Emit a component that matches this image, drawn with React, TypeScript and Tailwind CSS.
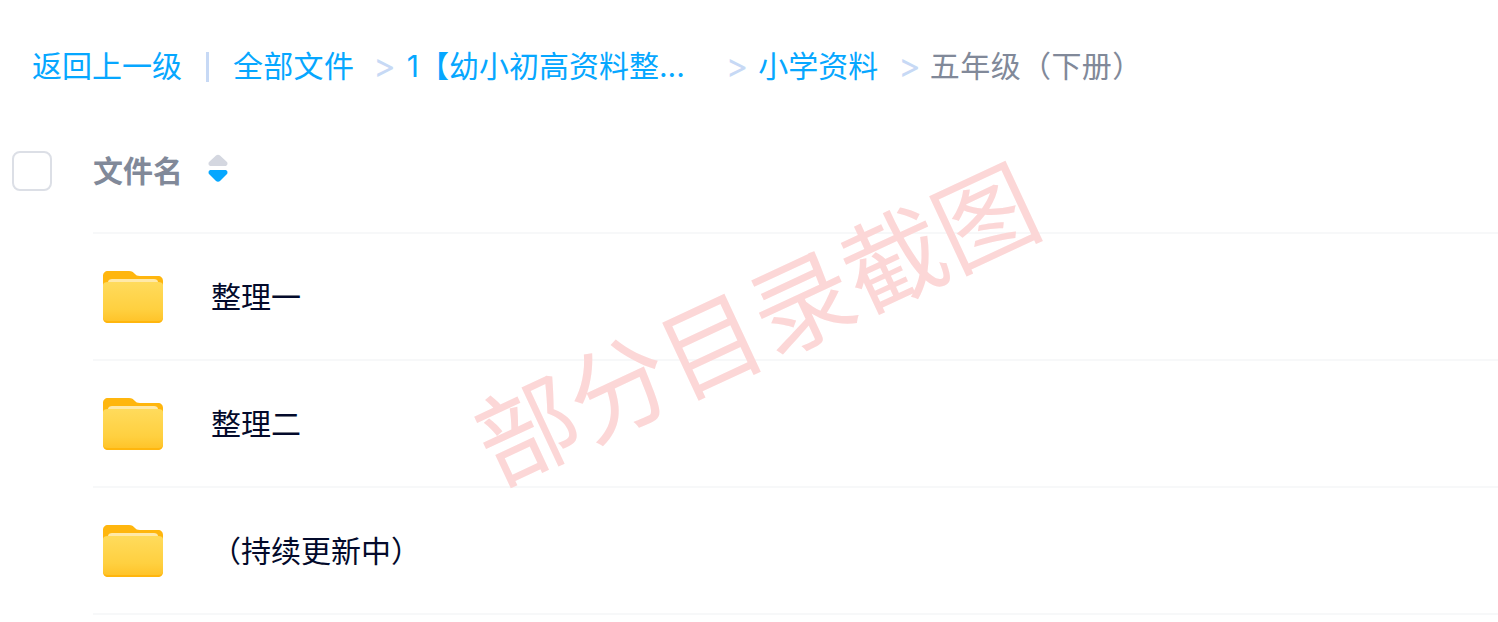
const FONT = "font-['Inter','Noto_Sans_CJK_SC',sans-serif]";

function Folder() {
  return (
    <svg width="60" height="53" viewBox="0 0 60 53" className="shrink-0">
      <defs>
        <linearGradient id="fb" x1="0" y1="0" x2="0" y2="1">
          <stop offset="0" stopColor="#ffdb5c" />
          <stop offset="0.7" stopColor="#ffd040" />
          <stop offset="1" stopColor="#ffc42a" />
        </linearGradient>
      </defs>
      <path d="M5 0H26C29 0 30 1 32 3C33 4 34 5 37 5H55C58 5 60 7 60 10V47C60 50 58 52 55 52H5C2 52 0 50 0 47V5C0 2 2 0 5 0Z" fill="#ffb60e" />
      <path d="M0 14C0 12 2 11 5 11H55C58 11 60 12 60 14V47C60 49 58 50 55 50H5C2 50 0 49 0 47Z" fill="url(#fb)" />
      <path d="M5 11C5 9 7 8 9 8H51C53 8 55 9 55 11Z" fill="#ffe9a8" />
    </svg>
  );
}

function Row({ name }: { name: string }) {
  return (
    <div className="ml-[93px] h-[127px] flex items-center border-b-2 border-[#f7f8f9]">
      <div className="ml-[10px] mt-[1px]"><Folder /></div>
      <span className="ml-[48px] mt-[1px] text-[30px] leading-[40px] text-[#030a2b] whitespace-pre">{name}</span>
    </div>
  );
}

function Sep() {
  return <span className="text-[34px] leading-[40px] text-[#c7d9f5]">&gt;</span>;
}

export default function App() {
  return (
    <div className={`${FONT} relative w-[1498px] h-[622px] overflow-hidden bg-white`}>
      <div className="h-[132px] pt-[46px] pl-[32px] flex items-start text-[30px] leading-[40px] text-[#06a7ff] whitespace-pre">
        <span>返回上一级</span>
        <span className="ml-[24px] w-[3px] h-[30px] mt-[6px] bg-[#c7d9f5]" />
        <span className="ml-[24px] tracking-[0.3px]">全部文件</span>
        <span className="ml-[19px]"><Sep /></span>
        <span className="ml-[11px]">1【幼小初高资料整...</span>
        <span className="ml-[41px]"><Sep /></span>
        <span className="ml-[10px]">小学资料</span>
        <span className="ml-[20px]"><Sep /></span>
        <span className="ml-[9px] tracking-[0.4px] text-[#818999]">五年级（下册）</span>
      </div>
      <div className="h-[102px] flex items-start pl-[12px] pt-[19px]">
        <span className="w-[40px] h-[40px] rounded-[8px] border-2 border-[#dcdfe6] bg-white" />
        <span className="ml-[41px] text-[30px] leading-[40px] font-bold text-[#818999]">文件名</span>
        <svg width="20" height="30" viewBox="0 0 20 30" className="ml-[25px] mt-[3px]">
          <path d="M8 1.5C9 .5 11 .5 12 1.5L19 8C20 9.5 19.5 12 17 12H3C.5 12 0 9.5 1 8Z" fill="#d4d7e0" />
          <path d="M3 16H17C19.5 16 20 18.5 19 20L12 27C11 28 9 28 8 27L1 20C0 18.5 .5 16 3 16Z" fill="#06a7ff" />
        </svg>
      </div>
      <div className="ml-[93px] border-b-2 border-[#f7f8f9] -mt-[2px]" />
      <Row name="整理一" />
      <Row name="整理二" />
      <Row name="（持续更新中）" />
      <div className="absolute left-[757px] top-[325px] -translate-x-1/2 -translate-y-1/2 -rotate-[25deg] whitespace-pre text-[101px] leading-none text-[#fcd7d7]">部分目录截图</div>
    </div>
  );
}
